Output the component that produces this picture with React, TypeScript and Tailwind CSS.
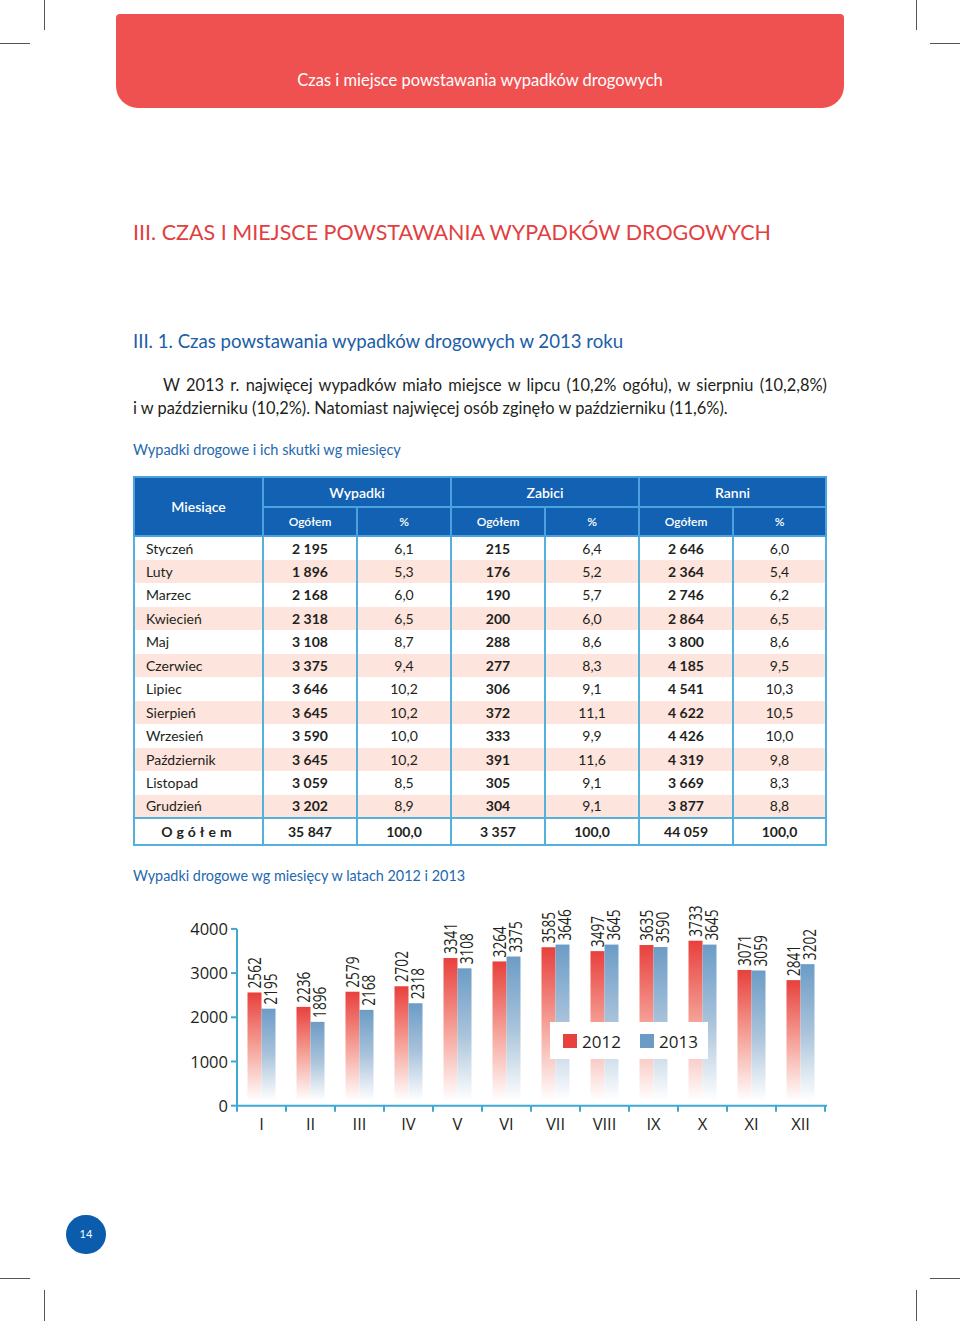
import React from 'react';

const rows = [
  ['Styczeń', '2 195', '6,1', '215', '6,4', '2 646', '6,0'],
  ['Luty', '1 896', '5,3', '176', '5,2', '2 364', '5,4'],
  ['Marzec', '2 168', '6,0', '190', '5,7', '2 746', '6,2'],
  ['Kwiecień', '2 318', '6,5', '200', '6,0', '2 864', '6,5'],
  ['Maj', '3 108', '8,7', '288', '8,6', '3 800', '8,6'],
  ['Czerwiec', '3 375', '9,4', '277', '8,3', '4 185', '9,5'],
  ['Lipiec', '3 646', '10,2', '306', '9,1', '4 541', '10,3'],
  ['Sierpień', '3 645', '10,2', '372', '11,1', '4 622', '10,5'],
  ['Wrzesień', '3 590', '10,0', '333', '9,9', '4 426', '10,0'],
  ['Październik', '3 645', '10,2', '391', '11,6', '4 319', '9,8'],
  ['Listopad', '3 059', '8,5', '305', '9,1', '3 669', '8,3'],
  ['Grudzień', '3 202', '8,9', '304', '9,1', '3 877', '8,8'],
];

const y2012 = [2562, 2236, 2579, 2702, 3341, 3264, 3585, 3497, 3635, 3733, 3071, 2841];
const y2013 = [2195, 1896, 2168, 2318, 3108, 3375, 3646, 3645, 3590, 3645, 3059, 3202];
const months = ['I', 'II', 'III', 'IV', 'V', 'VI', 'VII', 'VIII', 'IX', 'X', 'XI', 'XII'];

// chart geometry (svg origin = page x 133, y 895)
const AX = 104;
const Y0 = 211.7;
const K = 0.0442;
const STEP = 49;

function CropMarks() {
  return (
    <>
      <div className="absolute left-[44px] top-0 h-[30px] w-px bg-[#555]" />
      <div className="absolute left-0 top-[43px] h-px w-[30px] bg-[#555]" />
      <div className="absolute left-[916px] top-0 h-[30px] w-px bg-[#555]" />
      <div className="absolute right-0 top-[43px] h-px w-[30px] bg-[#555]" />
      <div className="absolute left-0 top-[1278px] h-px w-[30px] bg-[#555]" />
      <div className="absolute left-[44px] top-[1290px] h-[31px] w-px bg-[#555]" />
      <div className="absolute right-0 top-[1278px] h-px w-[30px] bg-[#555]" />
      <div className="absolute left-[916px] top-[1290px] h-[31px] w-px bg-[#555]" />
    </>
  );
}

function Chart() {
  const label = (v: number, x: number, top: number) => (
    <text
      key={`${x}-${v}`}
      transform={`translate(${x},${top - 4}) rotate(-90) scale(0.76,1)`}
      fontSize="18"
      fill="#231f20"
    >
      {v}
    </text>
  );

  return (
    <svg width="694" height="245" className="mt-[8px] block font-['Open_Sans',sans-serif]">
      <defs>
        <linearGradient id="gRed" x1="0" y1="0" x2="0" y2="1">
          <stop offset="0" stopColor="#e8403d" />
          <stop offset="0.5" stopColor="#f5a197" />
          <stop offset="1" stopColor="#ffffff" />
        </linearGradient>
        <linearGradient id="gBlue" x1="0" y1="0" x2="0" y2="1">
          <stop offset="0" stopColor="#6c9cc6" />
          <stop offset="0.5" stopColor="#a9c3db" />
          <stop offset="1" stopColor="#ffffff" />
        </linearGradient>
      </defs>

      {months.map((m, i) => {
        const cx = AX + STEP * (i + 0.5);
        const t1 = Y0 - y2012[i] * K;
        const t2 = Y0 - y2013[i] * K;
        return (
          <g key={m}>
            <rect x={cx - 14} y={t1} width="14" height={Y0 - 5 - t1} fill="url(#gRed)" />
            <rect x={cx} y={t2} width="14" height={Y0 - 5 - t2} fill="url(#gBlue)" />
            {label(y2012[i], cx - 0.5, t1)}
            {label(y2013[i], cx + 15, t2)}
            <text x={cx} y="236" textAnchor="middle" fontSize="16.5" fill="#231f20">
              {m}
            </text>
          </g>
        );
      })}

      {/* axes */}
      <line x1={AX} y1="35" x2={AX} y2={Y0} stroke="#3ea8d2" strokeWidth="2" />
      <line x1={AX - 1} y1={Y0} x2="694" y2={Y0} stroke="#3ea8d2" strokeWidth="2" />
      {[0, 1000, 2000, 3000, 4000].map((v) => {
        const y = Y0 - v * K;
        return (
          <g key={v}>
            <line x1={AX - 6} y1={y} x2={AX} y2={y} stroke="#3ea8d2" strokeWidth="2" />
            <text x={AX - 9} y={y + 6} textAnchor="end" fontSize="16.5" fill="#231f20">
              {v}
            </text>
          </g>
        );
      })}
      {Array.from({ length: 13 }).map((_, k) => (
        <line key={k} x1={AX + STEP * k} y1={Y0} x2={AX + STEP * k} y2={Y0 + 6} stroke="#3ea8d2" strokeWidth="2" />
      ))}

      {/* legend */}
      <rect x="417" y="128" width="158" height="37" fill="#ffffff" />
      <rect x="430" y="140" width="14" height="14" fill="#e8403d" />
      <text x="449" y="154" fontSize="17" fill="#231f20">2012</text>
      <rect x="507" y="140" width="14" height="14" fill="#6c9cc6" />
      <text x="526" y="154" fontSize="17" fill="#231f20">2013</text>
    </svg>
  );
}

export default function App() {
  const bd = 'border-[#56b0dc]';
  return (
    <div className="relative h-[1321px] w-[960px] overflow-hidden bg-white font-['Lato','Open_Sans',sans-serif] text-[#231f20]">
      <CropMarks />

      {/* banner */}
      <div className="mx-[116px] mt-[14px] flex h-[94px] items-end justify-center rounded-t-[4px] rounded-b-[22px] bg-[#ef5150] pb-[17px]">
        <span className="text-[16.5px] leading-[22px] text-white">Czas i miejsce powstawania wypadków drogowych</span>
      </div>

      <div className="px-[133px]">
        <h1 className="mt-[110px] text-[21.5px] leading-[28px] text-[#e2403f]">
          III. CZAS I MIEJSCE POWSTAWANIA WYPADKÓW DROGOWYCH
        </h1>

        <h2 className="mt-[83px] text-[18.6px] leading-[24px] text-[#1b5ea6]">
          III. 1. Czas powstawania wypadków drogowych w 2013 roku
        </h2>

        <div className="mt-[20px] text-[16.4px] leading-[23px]">
          <div className="pl-[30px] text-justify [text-align-last:justify]">
            W 2013 r. najwięcej wypadków miało miejsce w lipcu (10,2% ogółu), w sierpniu (10,2,8%)
          </div>
          <div>i w październiku (10,2%). Natomiast najwięcej osób zginęło w październiku (11,6%).</div>
        </div>

        <div className="mt-[21px] text-[14.5px] leading-[20px] text-[#2468ae]">Wypadki drogowe i ich skutki wg miesięcy</div>

        <table className={`mt-[16px] w-[692px] table-fixed border-collapse border-2 ${bd} text-[14px]`}>
          <colgroup>
            <col className="w-[129px]" />
            <col className="w-[94px]" />
            <col className="w-[94px]" />
            <col className="w-[94px]" />
            <col className="w-[94px]" />
            <col className="w-[94px]" />
            <col className="w-[93px]" />
          </colgroup>
          <thead className="bg-[#1261b2] text-white">
            <tr className="h-[30px]">
              <th rowSpan={2} className="border-2 border-[#4aa3de] text-[14px] font-semibold">
                Miesiące
              </th>
              <th colSpan={2} className="border-2 border-[#4aa3de] text-[14px] font-semibold">
                Wypadki
              </th>
              <th colSpan={2} className="border-2 border-[#4aa3de] text-[14px] font-semibold">
                Zabici
              </th>
              <th colSpan={2} className="border-2 border-[#4aa3de] text-[14px] font-semibold">
                Ranni
              </th>
            </tr>
            <tr className="h-[29px]">
              {['Ogółem', '%', 'Ogółem', '%', 'Ogółem', '%'].map((h, i) => (
                <th key={i} className="border-2 border-[#4aa3de] text-[12px] font-semibold">
                  {h}
                </th>
              ))}
            </tr>
          </thead>
          <tbody>
            {rows.map((r, i) => (
              <tr key={r[0]} className={`h-[23.5px] ${i % 2 === 1 ? 'bg-[#fde4dc]' : 'bg-white'}`}>
                <td className={`border-x-2 ${bd} pl-[11px] text-left`}>{r[0]}</td>
                {r.slice(1).map((c, j) => (
                  <td key={j} className={`border-x-2 ${bd} text-center ${j % 2 === 0 ? 'font-bold' : ''}`}>
                    {c}
                  </td>
                ))}
              </tr>
            ))}
            <tr className={`h-[27px] border-t-2 ${bd} bg-white font-bold`}>
              <td className={`border-x-2 ${bd} text-center tracking-[4px]`}>Ogółem</td>
              {['35 847', '100,0', '3 357', '100,0', '44 059', '100,0'].map((c, j) => (
                <td key={j} className={`border-x-2 ${bd} text-center`}>
                  {c}
                </td>
              ))}
            </tr>
          </tbody>
        </table>

        <div className="mt-[20px] text-[14.4px] leading-[20px] text-[#2468ae]">
          Wypadki drogowe wg miesięcy w latach 2012 i 2013
        </div>

        <Chart />
      </div>

      {/* page number */}
      <div className="absolute left-[66px] top-[1215px] flex h-[39px] w-[40px] items-center justify-center rounded-full bg-[#0b5cad] text-[11px] text-white">
        14
      </div>
    </div>
  );
}
